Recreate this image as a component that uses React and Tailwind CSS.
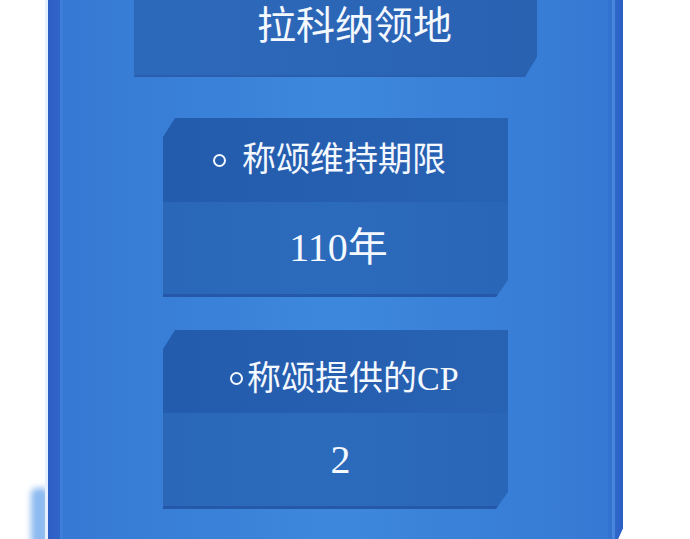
import React from 'react';

const serif = { fontFamily: '"Liberation Serif", "Noto Sans CJK SC", serif' };

// Cut-corner shapes used by the stat cards
const cutBottomRight =
  '[clip-path:polygon(0_0,100%_0,100%_calc(100%_-_20px),calc(100%_-_12px)_100%,0_100%)]';

const Ring = ({ className = '' }) => (
  <span
    className={`inline-block w-[13px] h-[13px] rounded-full border-2 border-[#f2f7ff] shrink-0 ${className}`}
  />
);

const StatCard = ({ label, value, ringGap, padLeft, headerH, valueOffset }) => (
  <div
    className={`w-[345px] h-[179px] flex flex-col text-[#f4f8ff] [clip-path:polygon(12px_0,100%_0,100%_calc(100%_-_17px),calc(100%_-_12px)_100%,0_100%,0_19px)]`}
  >
    <div
      className={`flex items-center bg-gradient-to-r from-[#245cad] to-[#2862b3] ${headerH} ${padLeft}`}
    >
      <Ring />
      <span className={`text-[34px] leading-none ${ringGap}`} style={serif}>
        {label}
      </span>
    </div>
    <div className="flex-1 flex items-center justify-center bg-gradient-to-r from-[#2a67b8] via-[#2c6abb] to-[#2a66b7] border-b-[3px] border-[#2558a8]">
      <span className={`text-[40px] leading-none ${valueOffset}`} style={serif}>
        {value}
      </span>
    </div>
  </div>
);

export default function App() {
  return (
    <div className="relative w-[690px] h-[539px] bg-white overflow-hidden">
      {/* soft glow leaking off the left edge of the frame */}
      <div className="absolute left-[31px] top-[488px] w-[18px] h-[60px] rounded-md bg-[#8dbaf0] blur-[3px]" />
      <div className="absolute left-[45px] top-[448px] w-[6px] h-[28px] rounded-sm bg-[#3f83dc]" />
      <div className="absolute left-[45px] top-0 w-[3px] h-[539px] bg-[#e6efff]" />

      <div className="relative ml-[48px] w-[575px] h-full flex bg-[#3a80d7] [clip-path:polygon(0_0,100%_0,100%_calc(100%_-_11px),calc(100%_-_5px)_100%,0_100%)]">
        {/* frame rails, left */}
        <div className="w-[12px] h-full bg-gradient-to-r from-[#2c5ec4] to-[#3165c9]" />
        <div className="w-[3px] h-full bg-[#3d7fd8]" />

        {/* main area */}
        <div className="flex-1 h-full flex flex-col bg-gradient-to-r from-[#3679d4] via-[#3d88dc] to-[#3679d4]">
          <div
            className={`ml-[71px] w-[403px] h-[77px] flex justify-center pt-[6px] pl-[38px] bg-gradient-to-r from-[#2d69bb] to-[#2a62b2] border-b-2 border-[#295fae] ${cutBottomRight}`}
          >
            <span className="text-[39px] leading-none text-[#f4f8ff]" style={serif}>
              拉科纳领地
            </span>
          </div>

          <div className="ml-[100px] mt-[41px]">
            <StatCard
              label="称颂维持期限"
              value="110年"
              ringGap="ml-[16px]"
              padLeft="pl-[50px]"
              headerH="h-[84px]"
              valueOffset="ml-[6px]"
            />
          </div>

          <div className="ml-[100px] mt-[33px]">
            <StatCard
              label="称颂提供的CP"
              value="2"
              ringGap="ml-[4px]"
              padLeft="pl-[67px] pt-[14px]"
              headerH="h-[83px]"
              valueOffset="ml-[10px]"
            />
          </div>
        </div>

        {/* frame rails, right */}
        <div className="w-[4px] h-full bg-[#3474d0]" />
        <div className="w-[3px] h-full bg-[#4686dc]" />
        <div className="w-[8px] h-full bg-gradient-to-r from-[#3068cc] to-[#2b5dc2]" />
      </div>
    </div>
  );
}
